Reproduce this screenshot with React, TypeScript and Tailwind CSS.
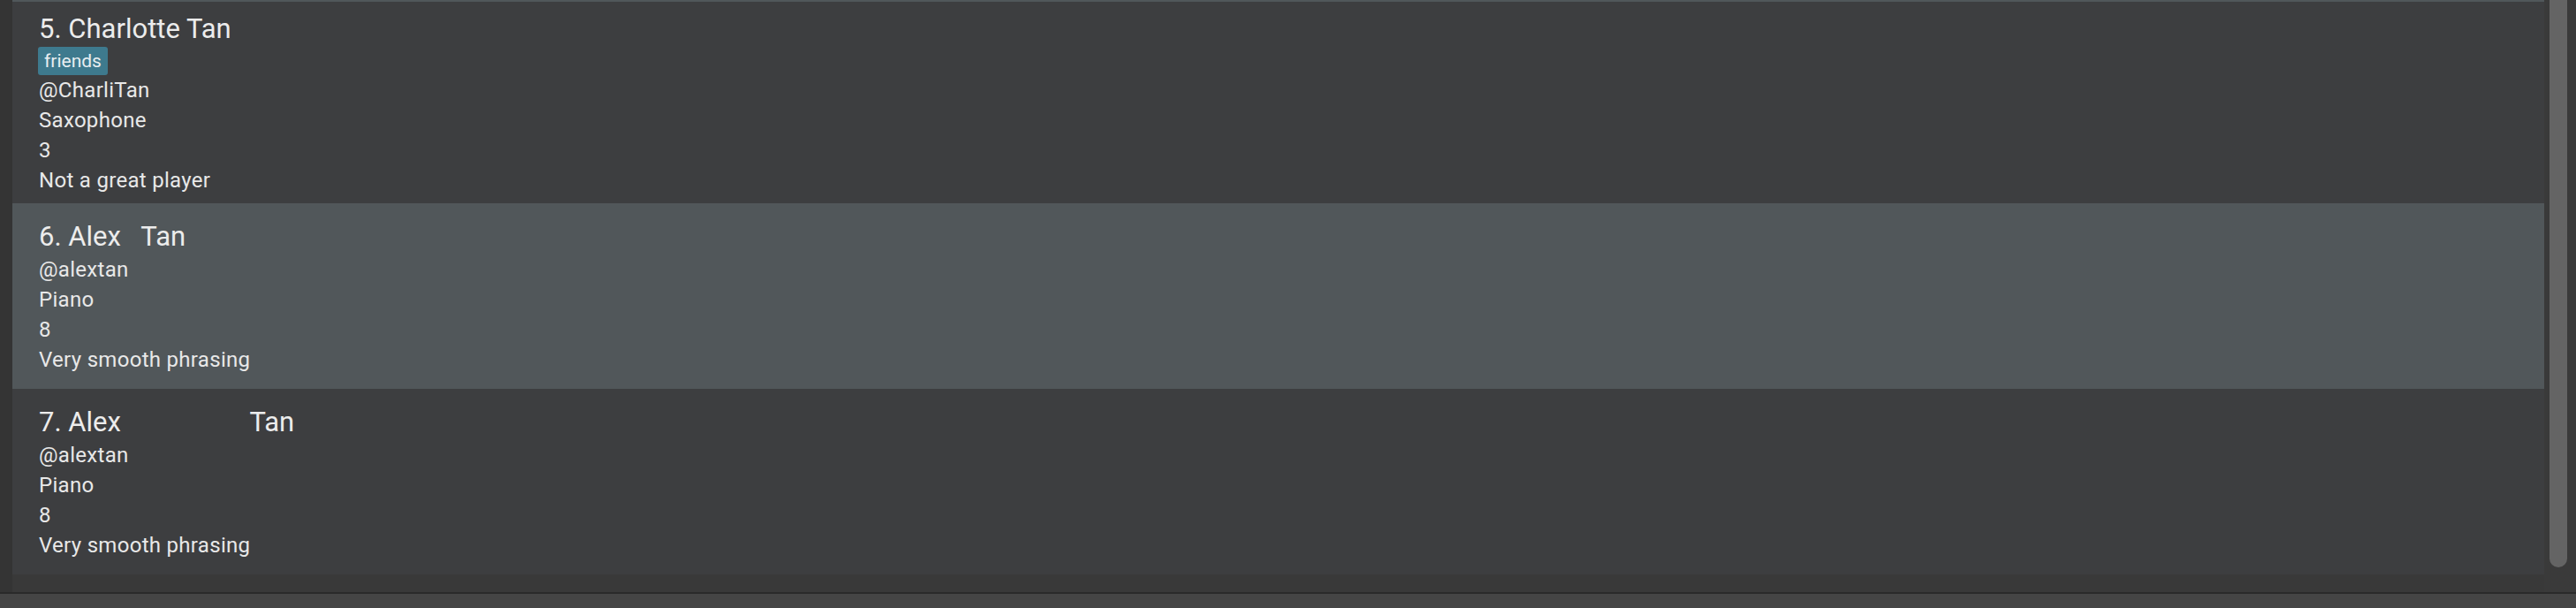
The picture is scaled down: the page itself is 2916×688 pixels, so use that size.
const font = "font-['Roboto','Liberation_Sans',sans-serif]";

type Person = {
  index: number;
  name: string;
  tags: string[];
  handle: string;
  instrument: string;
  level: string;
  comment: string;
};

const people: Person[] = [
  {
    index: 5,
    name: 'Charlotte Tan',
    tags: ['friends'],
    handle: '@CharliTan',
    instrument: 'Saxophone',
    level: '3',
    comment: 'Not a great player',
  },
  {
    index: 6,
    name: 'Alex   Tan',
    tags: [],
    handle: '@alextan',
    instrument: 'Piano',
    level: '8',
    comment: 'Very smooth phrasing',
  },
  {
    index: 7,
    name: 'Alex                   Tan',
    tags: [],
    handle: '@alextan',
    instrument: 'Piano',
    level: '8',
    comment: 'Very smooth phrasing',
  },
];

function PersonCard({ person, className }: { person: Person; className: string }) {
  return (
    <div className={`flex flex-col pl-[30px] pt-[18px] ${className}`}>
      <div className="whitespace-pre text-[31px] leading-[40px] text-[#ececec]">
        {person.index}. {person.name}
      </div>
      {person.tags.length > 0 && (
        <div className="-ml-[1px] flex h-[32px] gap-2">
          {person.tags.map((tag) => (
            <span
              key={tag}
              className="rounded-[3px] bg-[#3e7a8e] px-[7px] text-[21px] leading-[32px] text-[#e8eef1]"
            >
              {tag}
            </span>
          ))}
        </div>
      )}
      {[person.handle, person.instrument, person.level, person.comment].map((line, i) => (
        <div key={i} className="text-[24px] leading-[34px] tracking-[0.3px] text-[#e8e8e8]">
          {line}
        </div>
      ))}
    </div>
  );
}

export default function App() {
  return (
    <div className={`flex h-[688px] w-[2916px] flex-col bg-[#393939] ${font}`}>
      <div className="flex h-[670px]">
        <div className="w-[14px] bg-[#343434]" />
        <div className="flex flex-1 flex-col overflow-hidden bg-[#393939]">
          <div className="h-[2px] bg-[#50575a]" />
          <div className="h-[228px] overflow-hidden">
            <PersonCard person={people[0]} className="-mt-[7px] bg-[#3d3e40] pb-[9px]" />
          </div>
          <PersonCard person={people[1]} className="bg-[#51575a] pb-[16px]" />
          <PersonCard person={people[2]} className="bg-[#3d3e40] pb-[16px]" />
        </div>
        <div className="flex w-[36px] bg-[#3a3a3a] pl-[6px]">
          <div className="h-[642px] w-[20px] rounded-b-[10px] bg-[#646464]" />
        </div>
      </div>
      <div className="h-[2px] bg-[#2a2a2a]" />
      <div className="flex-1 bg-[#454545]" />
    </div>
  );
}
